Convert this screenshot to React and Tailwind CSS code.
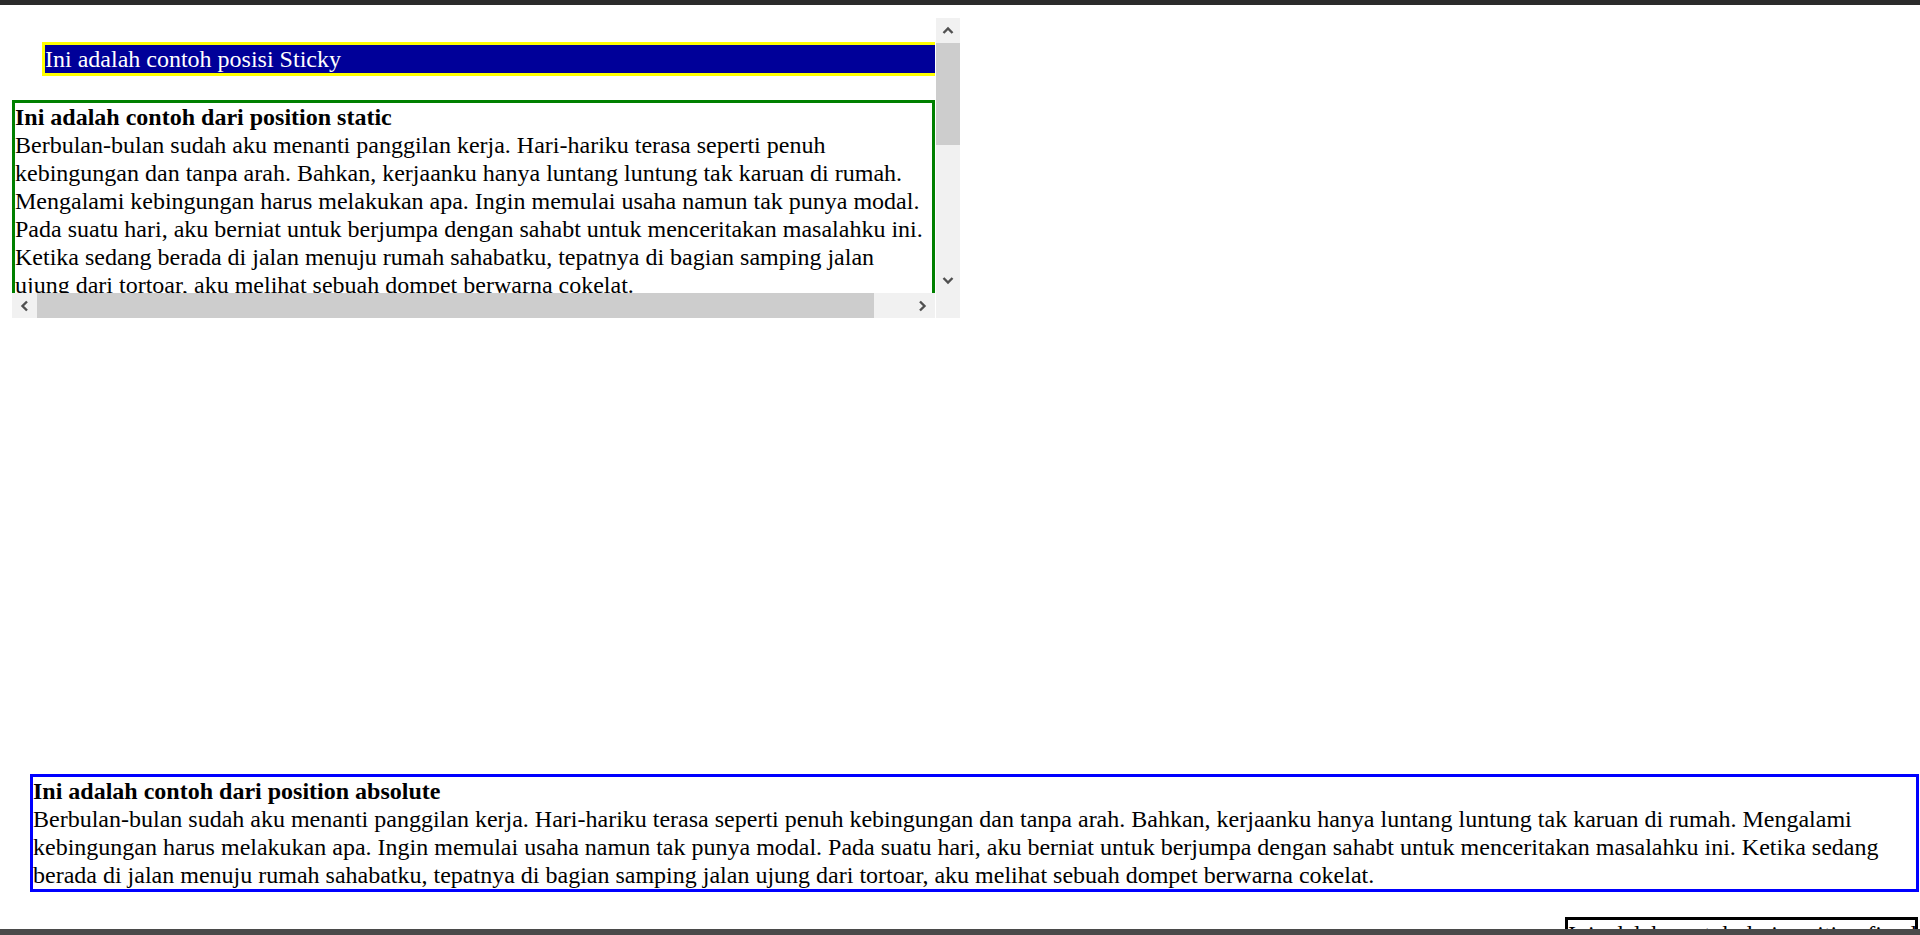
import React from "react";

const staticLines = [
  "Berbulan-bulan sudah aku menanti panggilan kerja. Hari-hariku terasa seperti penuh",
  "kebingungan dan tanpa arah. Bahkan, kerjaanku hanya luntang luntung tak karuan di rumah.",
  "Mengalami kebingungan harus melakukan apa. Ingin memulai usaha namun tak punya modal.",
  "Pada suatu hari, aku berniat untuk berjumpa dengan sahabt untuk menceritakan masalahku ini.",
  "Ketika sedang berada di jalan menuju rumah sahabatku, tepatnya di bagian samping jalan",
  "ujung dari tortoar, aku melihat sebuah dompet berwarna cokelat.",
];

const absLines = [
  "Berbulan-bulan sudah aku menanti panggilan kerja. Hari-hariku terasa seperti penuh kebingungan dan tanpa arah. Bahkan, kerjaanku hanya luntang luntung tak karuan di rumah. Mengalami",
  "kebingungan harus melakukan apa. Ingin memulai usaha namun tak punya modal. Pada suatu hari, aku berniat untuk berjumpa dengan sahabt untuk menceritakan masalahku ini. Ketika sedang",
  "berada di jalan menuju rumah sahabatku, tepatnya di bagian samping jalan ujung dari tortoar, aku melihat sebuah dompet berwarna cokelat.",
];

function Chevron({ dir }) {
  const pts = {
    up: "1.5,7 6,2.5 10.5,7",
    down: "1.5,2 6,6.5 10.5,2",
    left: "7,1.5 2.5,6 7,10.5",
    right: "2,1.5 6.5,6 2,10.5",
  }[dir];
  const vertical = dir === "up" || dir === "down";
  return (
    <svg
      width={vertical ? 12 : 9}
      height={vertical ? 9 : 12}
      viewBox={vertical ? "0 0 12 9" : "0 0 9 12"}
    >
      <polyline points={pts} fill="none" stroke="#505050" strokeWidth="2.4" strokeLinejoin="miter" />
    </svg>
  );
}

export default function App() {
  return (
    <div className="relative w-[1920px] h-[935px] overflow-hidden bg-white flex flex-col font-['Liberation_Serif','Times_New_Roman',serif] text-[24px] leading-[28px] text-black">
      <div className="h-[5px] shrink-0 bg-[#2b2b2b]" />

      <div className="flex-1 flex flex-col min-h-0">
        {/* scroll container */}
        <div className="ml-[12px] mt-[13px] w-[948px] h-[300px] shrink-0 grid grid-cols-[923px_25px] grid-rows-[275px_25px]">
          <div className="overflow-hidden bg-white">
            <div className="ml-[30px] mt-[24px] w-[923px] border-[3px] border-[#ffff00] bg-[#000099] text-white whitespace-nowrap">
              Ini adalah contoh posisi Sticky
            </div>
            <div className="mt-[24px] w-[923px] border-[3px] border-[#008000] whitespace-nowrap">
              <div className="font-bold">Ini adalah contoh dari position static</div>
              {staticLines.map((l, i) => (
                <div key={i}>{l}</div>
              ))}
            </div>
          </div>

          {/* vertical scrollbar */}
          <div className="bg-[#f1f1f1] flex flex-col border-l border-white">
            <div className="h-[25px] flex items-center justify-center">
              <Chevron dir="up" />
            </div>
            <div className="h-[102px] bg-[#cdcdcd]" />
            <div className="flex-1" />
            <div className="h-[25px] flex items-center justify-center">
              <Chevron dir="down" />
            </div>
          </div>

          {/* horizontal scrollbar */}
          <div className="bg-[#f1f1f1] flex">
            <div className="w-[25px] flex items-center justify-center">
              <Chevron dir="left" />
            </div>
            <div className="w-[837px] bg-[#cdcdcd]" />
            <div className="flex-1" />
            <div className="w-[25px] flex items-center justify-center">
              <Chevron dir="right" />
            </div>
          </div>

          <div className="bg-[#f1f1f1] border-l border-white" />
        </div>

        {/* absolute box */}
        <div className="ml-[30px] mt-[456px] w-[1889px] shrink-0 border-[3px] border-[#0000ff] whitespace-nowrap">
          <div className="font-bold">Ini adalah contoh dari position absolute</div>
          {absLines.map((l, i) => (
            <div key={i}>{l}</div>
          ))}
        </div>
      </div>

      <div className="relative z-10 h-[6px] shrink-0 bg-[#4a4a4a]" />

      {/* fixed box */}
      <div className="absolute top-[917px] left-[1565px] w-[353px] h-[60px] border-[3px] border-black bg-white whitespace-nowrap overflow-hidden">
        Ini adalah contoh dari position fixed
      </div>
    </div>
  );
}
